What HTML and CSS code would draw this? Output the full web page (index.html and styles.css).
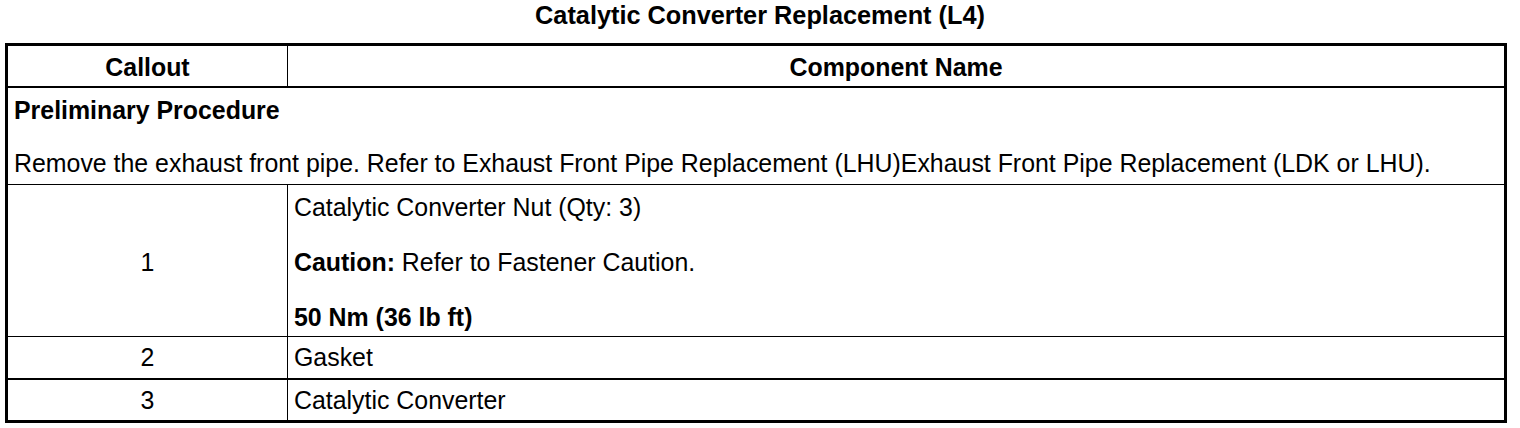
FILE: index.html
```html
<!DOCTYPE html>
<html>
<head>
<meta charset="utf-8">
<link rel="stylesheet" href="styles.css">
</head>
<body>
<h1 class="title">Catalytic Converter Replacement (L4)</h1>
<table class="parts">
  <colgroup><col class="c1"><col class="c2"></colgroup>
  <thead>
    <tr class="head"><th>Callout</th><th>Component Name</th></tr>
  </thead>
  <tbody>
    <tr class="prelim">
      <td colspan="2">
        <div class="stack prelim-stack">
          <p class="bold">Preliminary Procedure</p>
          <p>Remove the exhaust front pipe. Refer to Exhaust Front Pipe Replacement (LHU)Exhaust Front Pipe Replacement (LDK or LHU).</p>
        </div>
      </td>
    </tr>
    <tr class="row1">
      <td class="num">1</td>
      <td>
        <div class="stack">
          <p>Catalytic Converter Nut (Qty: 3)</p>
          <p><b>Caution:</b> Refer to Fastener Caution.</p>
          <p class="bold">50 Nm (36 lb ft)</p>
        </div>
      </td>
    </tr>
    <tr class="row2">
      <td class="num">2</td>
      <td>Gasket</td>
    </tr>
    <tr class="row3">
      <td class="num">3</td>
      <td>Catalytic Converter</td>
    </tr>
  </tbody>
</table>
</body>
</html>
```
FILE: styles.css
```css
html, body {
  margin: 0;
  padding: 0;
  background: #fff;
  color: #000;
  font-family: "Liberation Sans", Arial, sans-serif;
}
body {
  width: 1520px;
  height: 428px;
  overflow: hidden;
}
.title {
  margin: 0;
  padding-top: 1px;
  height: 43px;
  box-sizing: border-box;
  text-align: center;
  font-size: 25.3px;
  line-height: 28px;
  font-weight: bold;
}
.parts {
  margin-left: 5px;
  width: 1502px;
  border-collapse: collapse;
  border: 3px solid #000;
  font-size: 24.9px;
  line-height: 28px;
  table-layout: fixed;
}
.c1 { width: 281px; }
.parts th, .parts td {
  border: 1px solid #000;
  padding: 6px 6px;
  vertical-align: middle;
}
.parts th {
  font-weight: bold;
  text-align: center;
  padding: 7px 6px 5px;
}
.head th { border-bottom: 2px solid #000; }
.parts td.num { text-align: center; }
.parts p { margin: 0; }
.bold { font-weight: bold; }
.stack {
  display: flex;
  flex-direction: column;
  gap: 27px;
}
.prelim td { padding: 8px 6px 7px; }
.prelim-stack { gap: 25px; }
.row1 td { padding: 8px 6px 5px; }
.row2 td { border-bottom: 2px solid #000; padding: 6px 6px 7px; }
.row3 td { padding: 6px 6px 6px; }
```
